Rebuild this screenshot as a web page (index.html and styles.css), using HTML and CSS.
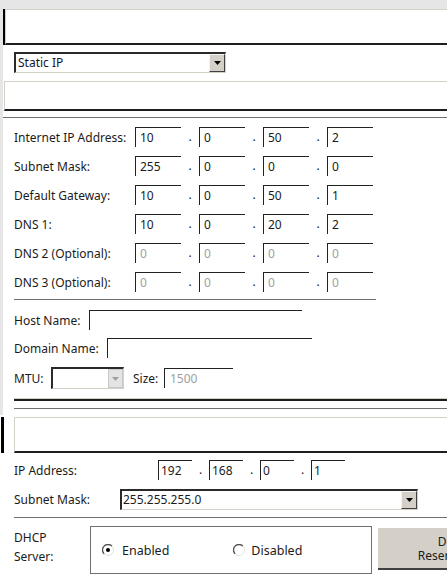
FILE: index.html
```html
<!DOCTYPE html>
<html>
<head>
<meta charset="utf-8">
<link rel="stylesheet" href="styles.css">
</head>
<body>
<div class="upper">
  <div class="panel">
    <div class="hdr"><div class="hdr-box"></div></div>
    <div class="sel-row">
      <div class="select sel-conn">
        <span class="sel-text">Static IP</span>
        <span class="sel-btn"><svg width="7" height="4" viewBox="0 0 7 4"><path d="M0 0H7L3.5 4Z" fill="#000"/></svg></span>
      </div>
    </div>
    <div class="box2"></div>
    <div class="rule"></div>

    <div class="ip-rows">
      <div class="ip-row"><span class="lbl">Internet IP Address:</span><span class="oct">10</span><span class="dot">.</span><span class="oct">0</span><span class="dot">.</span><span class="oct">50</span><span class="dot">.</span><span class="oct">2</span></div>
      <div class="ip-row"><span class="lbl">Subnet Mask:</span><span class="oct">255</span><span class="dot">.</span><span class="oct">0</span><span class="dot">.</span><span class="oct">0</span><span class="dot">.</span><span class="oct">0</span></div>
      <div class="ip-row"><span class="lbl">Default Gateway:</span><span class="oct">10</span><span class="dot">.</span><span class="oct">0</span><span class="dot">.</span><span class="oct">50</span><span class="dot">.</span><span class="oct">1</span></div>
      <div class="ip-row"><span class="lbl">DNS 1:</span><span class="oct">10</span><span class="dot">.</span><span class="oct">0</span><span class="dot">.</span><span class="oct">20</span><span class="dot">.</span><span class="oct">2</span></div>
      <div class="ip-row"><span class="lbl">DNS 2 (Optional):</span><span class="oct dim">0</span><span class="dot">.</span><span class="oct dim">0</span><span class="dot">.</span><span class="oct dim">0</span><span class="dot">.</span><span class="oct dim">0</span></div>
      <div class="ip-row"><span class="lbl">DNS 3 (Optional):</span><span class="oct dim">0</span><span class="dot">.</span><span class="oct dim">0</span><span class="dot">.</span><span class="oct dim">0</span><span class="dot">.</span><span class="oct dim">0</span></div>
    </div>
    <div class="sep"></div>

    <div class="name-rows">
      <div class="name-row host"><span class="lbl-host">Host Name:</span><span class="field f-host"></span></div>
      <div class="name-row dom"><span class="lbl-dom">Domain Name:</span><span class="field f-dom"></span></div>
      <div class="name-row mtu">
        <span class="lbl-mtu">MTU:</span>
        <span class="combo">
          <span class="combo-text"></span>
          <span class="combo-btn"><svg width="7" height="4" viewBox="0 0 7 4"><path d="M0 0H7L3.5 4Z" fill="#a0a0a0"/></svg></span>
        </span>
        <span class="lbl-size">Size:</span>
        <span class="field f-size dim">1500</span>
      </div>
    </div>
    <div class="dbl"></div>
    <div class="rule2"></div>
  </div>
</div>

<div class="lower">
  <div class="lan-hdr"><div class="bar"></div><div class="lan-box"></div></div>
  <div class="lan-ip">
    <span class="lbl-lan">IP Address:</span>
    <span class="oct sm">192</span><span class="dot sm">.</span><span class="oct sm">168</span><span class="dot sm">.</span><span class="oct sm">0</span><span class="dot sm">.</span><span class="oct sm">1</span>
  </div>
  <div class="lan-mask">
    <span class="lbl-mask">Subnet Mask:</span>
    <div class="select sel-mask">
      <span class="sel-text">255.255.255.0</span>
      <span class="sel-btn"><svg width="7" height="4" viewBox="0 0 7 4"><path d="M0 0H7L3.5 4Z" fill="#000"/></svg></span>
    </div>
  </div>
  <div class="rule3"></div>
  <div class="dhcp-row">
    <span class="lbl-dhcp">DHCP<br>Server:</span>
    <div class="radio-box">
      <span class="radio">
        <svg width="12" height="12" viewBox="0 0 12 12"><circle cx="6" cy="6" r="5.5" fill="#fff" stroke="#e4e2dc"/><path d="M2.1 9.9A5.5 5.5 0 0 1 9.9 2.1" fill="none" stroke="#505050" stroke-width="1.3"/><circle cx="6" cy="6" r="2" fill="#000"/></svg>
        <span>Enabled</span>
      </span>
      <span class="radio r2">
        <svg width="12" height="12" viewBox="0 0 12 12"><circle cx="6" cy="6" r="5.5" fill="#fff" stroke="#e4e2dc"/><path d="M2.1 9.9A5.5 5.5 0 0 1 9.9 2.1" fill="none" stroke="#505050" stroke-width="1.3"/></svg>
        <span>Disabled</span>
      </span>
    </div>
    <div class="btn">DHCP<br>Reservations</div>
  </div>
</div>
</body>
</html>
```

FILE: styles.css
```css
html, body {
  margin: 0;
  padding: 0;
  width: 447px;
  height: 574px;
  overflow: hidden;
  background: #fff;
}
body {
  font-family: "Noto Sans", "Open Sans", sans-serif;
  font-size: 12px;
  color: #1b1b1b;
}
.upper {
  background: #e6e6e6;
  padding: 9px 0 0 3px;
}
.panel {
  background: #fff;
  padding-bottom: 6px;
}
.hdr {
  border-left: 2px solid #000;
}
.hdr-box {
  height: 33px;
  border-top: 1px solid #d4d0c8;
  border-left: 1px solid #d4d0c8;
  border-bottom: 2px solid #1e1e1e;
}
.sel-row {
  margin: 7px 0 0 11px;
  display: flex;
}
.select {
  box-sizing: border-box;
  height: 21px;
  display: flex;
  align-items: stretch;
  border-top: 2px solid #2a2a2a;
  border-left: 2px solid #2a2a2a;
  border-right: 1px solid #d4d0c8;
  border-bottom: 1px solid #d4d0c8;
  background: #fff;
  flex: none;
}
.sel-conn { width: 212px; }
.sel-text {
  flex: 1;
  padding-left: 2px;
  line-height: 17px;
  color: #14142a;
}
.sel-btn {
  width: 16px;
  flex: none;
  box-sizing: border-box;
  background: #d4d0c8;
  border-top: 1px solid #f4f4f4;
  border-left: 1px solid #f4f4f4;
  border-right: 1px solid #404040;
  border-bottom: 1px solid #404040;
  display: flex;
  align-items: center;
  justify-content: center;
}
.box2 {
  margin: 8px 0 0 1px;
  height: 27px;
  border-top: 1px solid #d4d0c8;
  border-left: 1px solid #d4d0c8;
  border-bottom: 2px solid #1e1e1e;
}
.rule {
  margin-top: 6px;
  height: 1px;
  background: #707070;
}
.ip-rows {
  padding: 9px 0 0 11px;
  display: flex;
  flex-direction: column;
  gap: 9px;
}
.ip-row {
  display: flex;
  align-items: center;
  height: 20px;
}
.ip-row > *, .lan-ip > *, .name-row > *, .lan-mask > *, .dhcp-row > * {
  flex: none;
}
.lbl { width: 121px; }
.oct {
  box-sizing: border-box;
  width: 46px;
  height: 20px;
  border-top: 1px solid #222;
  border-left: 1px solid #222;
  padding-left: 4px;
  line-height: 19px;
  color: #1b1b1b;
}
.oct.dim, .dim { color: #a0a0a0; }
.dot {
  width: 18px;
  text-align: center;
  line-height: 20px;
}
.sep {
  margin: 7px 0 0 11px;
  width: 362px;
  height: 1px;
  background: #707070;
}
.name-rows {
  margin: 10px 0 0 11px;
}
.name-row {
  display: flex;
  align-items: center;
}
.host, .dom { height: 20px; }
.dom { margin-top: 8px; }
.mtu { margin-top: 9px; height: 22px; }
.lbl-host { width: 75px; }
.lbl-dom { width: 93px; }
.lbl-mtu { width: 37px; }
.lbl-size { width: 31px; margin-left: 9px; }
.field {
  box-sizing: border-box;
  height: 20px;
  border-top: 1px solid #222;
  border-left: 1px solid #222;
  padding-left: 5px;
  line-height: 19px;
}
.f-host { width: 213px; }
.f-dom { width: 205px; }
.f-size { width: 69px; }
.combo {
  box-sizing: border-box;
  width: 73px;
  height: 22px;
  display: flex;
  border-top: 2px solid #2a2a2a;
  border-left: 2px solid #2a2a2a;
  border-right: 1px solid #d4d0c8;
  border-bottom: 1px solid #d4d0c8;
}
.combo-text { flex: 1; }
.combo-btn {
  width: 15px;
  box-sizing: border-box;
  background: #e4e4e4;
  border: 1px solid #c8c8c8;
  display: flex;
  align-items: center;
  justify-content: center;
}
.dbl {
  margin: 9px 0 0 11px;
  height: 0;
  border-top: 1px solid #d4d0c8;
  border-bottom: 2px solid #1e1e1e;
}
.rule2 {
  margin: 7px 0 0 11px;
  height: 1px;
  background: #707070;
}
.lower {
  padding-top: 2px;
}
.lan-hdr {
  display: flex;
}
.bar {
  width: 3px;
  margin-left: 1px;
  background: #000;
}
.lan-box {
  flex: 1;
  margin-left: 10px;
  height: 33px;
  border-top: 1px solid #d4d0c8;
  border-left: 1px solid #d4d0c8;
  border-bottom: 2px solid #1e1e1e;
}
.lan-ip {
  margin: 7px 0 0 14px;
  display: flex;
  align-items: center;
  height: 20px;
}
.lbl-lan { width: 144px; }
.oct.sm { width: 34px; padding-left: 2px; }
.dot.sm { width: 17px; }
.lan-mask {
  margin: 9px 0 0 14px;
  display: flex;
  align-items: center;
  height: 21px;
}
.lbl-mask { width: 106px; }
.sel-mask { width: 298px; }
.sel-mask .sel-text { padding-left: 1px; color: #1b1b1b; }
.rule3 {
  margin: 7px 0 0 14px;
  height: 1px;
  background: #707070;
}
.dhcp-row {
  margin: 8px 0 0 14px;
  display: flex;
  align-items: flex-start;
  width: 600px;
}
.lbl-dhcp {
  width: 76px;
  line-height: 19px;
  padding-top: 2px;
}
.radio-box {
  box-sizing: border-box;
  width: 282px;
  height: 48px;
  border: 1px solid #707070;
  display: flex;
  align-items: center;
  padding-left: 11px;
}
.radio {
  display: flex;
  align-items: center;
  gap: 8px;
  font-size: 12.5px;
}
.r2 { margin-left: 64px; gap: 6px; }
.btn {
  margin: 2px 0 0 6px;
  box-sizing: border-box;
  width: 152px;
  height: 42px;
  background: #d4d0c8;
  border-bottom: 2px solid #404040;
  text-align: center;
  line-height: 14px;
  padding-top: 7px;
}
```
